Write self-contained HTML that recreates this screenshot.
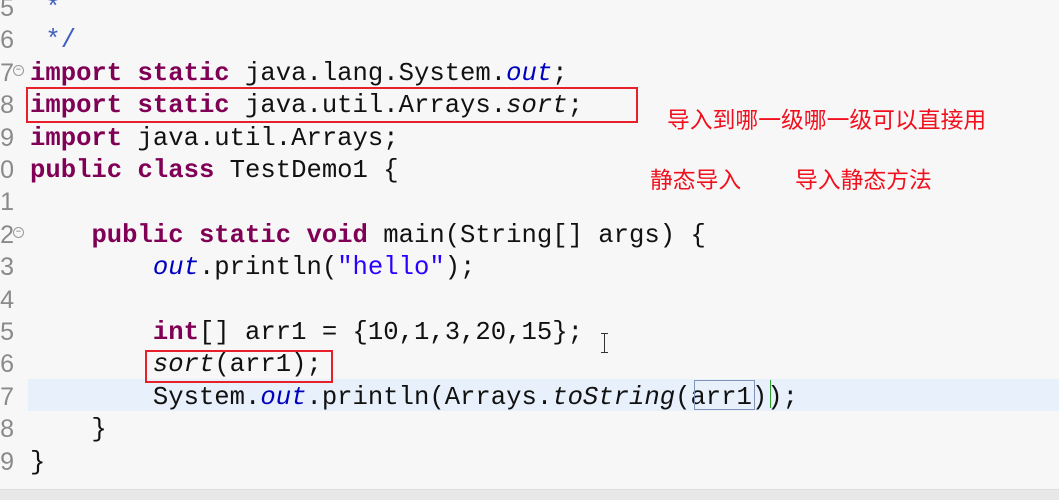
<!DOCTYPE html>
<html><head><meta charset="utf-8"><style>
body{margin:0;width:1059px;height:499px;overflow:hidden;background:#f7f7f7;position:relative;font-family:"Liberation Mono",monospace}
.ln{position:absolute;left:-6px;width:20px;color:#8a8a8a;font-size:25px;line-height:32.4px;font-family:"Liberation Sans",sans-serif;text-align:right}
.code{position:absolute;left:30px;top:-7px;font-size:25.6px;line-height:32.4px;white-space:pre;color:#111}
.k{color:#7f0055;font-weight:bold}
.c{color:#3f5fbf}
.f{color:#0000c0;font-style:italic}
.s{color:#2a00ff}
.i{font-style:italic}
.hl{position:absolute;left:28px;right:0;top:379px;height:32px;background:#e8f0fb}
.box{position:absolute;border:2px solid #e8202a}
.red{position:absolute;color:#f0101e;font-family:"Liberation Sans","Noto Sans CJK SC",sans-serif;font-size:22.8px;line-height:24px;white-space:nowrap}
</style></head><body>
<div class="hl"></div>
<div class="ln" style="top:-8px">5<br>6<br>7<br>8<br>9<br>0<br>1<br>2<br>3<br>4<br>5<br>6<br>7<br>8<br>9</div>
<div style="position:absolute;left:13px;top:65px;width:9px;height:9px;border:1px solid #999;border-radius:50%;font-size:9px;line-height:8px;text-align:center;color:#666;background:#f7f7f7">−</div>
<div style="position:absolute;left:13px;top:227px;width:9px;height:9px;border:1px solid #999;border-radius:50%;font-size:9px;line-height:8px;text-align:center;color:#666;background:#f7f7f7">−</div>
<div class="code"><span class="c"> *</span>
<span class="c"> */</span>
<span class="k">import</span> <span class="k">static</span> java.lang.System.<span class="f">out</span>;
<span class="k">import</span> <span class="k">static</span> java.util.Arrays.<span class="i">sort</span>;
<span class="k">import</span> java.util.Arrays;
<span class="k">public</span> <span class="k">class</span> TestDemo1 {

    <span class="k">public</span> <span class="k">static</span> <span class="k">void</span> main(String[] args) {
        <span class="f">out</span>.println(<span class="s">"hello"</span>);

        <span class="k">int</span>[] arr1 = {10,1,3,20,15};
        <span class="i">sort</span>(arr1);
        System.<span class="f">out</span>.println(Arrays.<span class="i">toString</span>(arr1));
    }
}</div>
<div class="box" style="left:26px;top:87px;width:608px;height:32px"></div>
<div class="box" style="left:145px;top:350px;width:184px;height:29px"></div>
<div style="position:absolute;left:694px;top:380px;width:59px;height:28px;border:1px solid #7f95b8"></div>
<div style="position:absolute;left:770px;top:380px;width:1px;height:28px;background:#2ca02c"></div>
<div style="position:absolute;left:604px;top:333px;width:1px;height:20px;background:#333"></div>
<div style="position:absolute;left:601px;top:333px;width:7px;height:1px;background:#333"></div>
<div style="position:absolute;left:601px;top:352px;width:7px;height:1px;background:#333"></div>
<div class="red" style="left:667px;top:108px">导入到哪一级哪一级可以直接用</div>
<div class="red" style="left:650px;top:168px">静态导入</div>
<div class="red" style="left:795px;top:168px">导入静态方法</div>
<div style="position:absolute;left:0;right:0;top:489px;height:10px;background:#e8e8e8;border-top:1px solid #ddd"></div>
</body></html>
